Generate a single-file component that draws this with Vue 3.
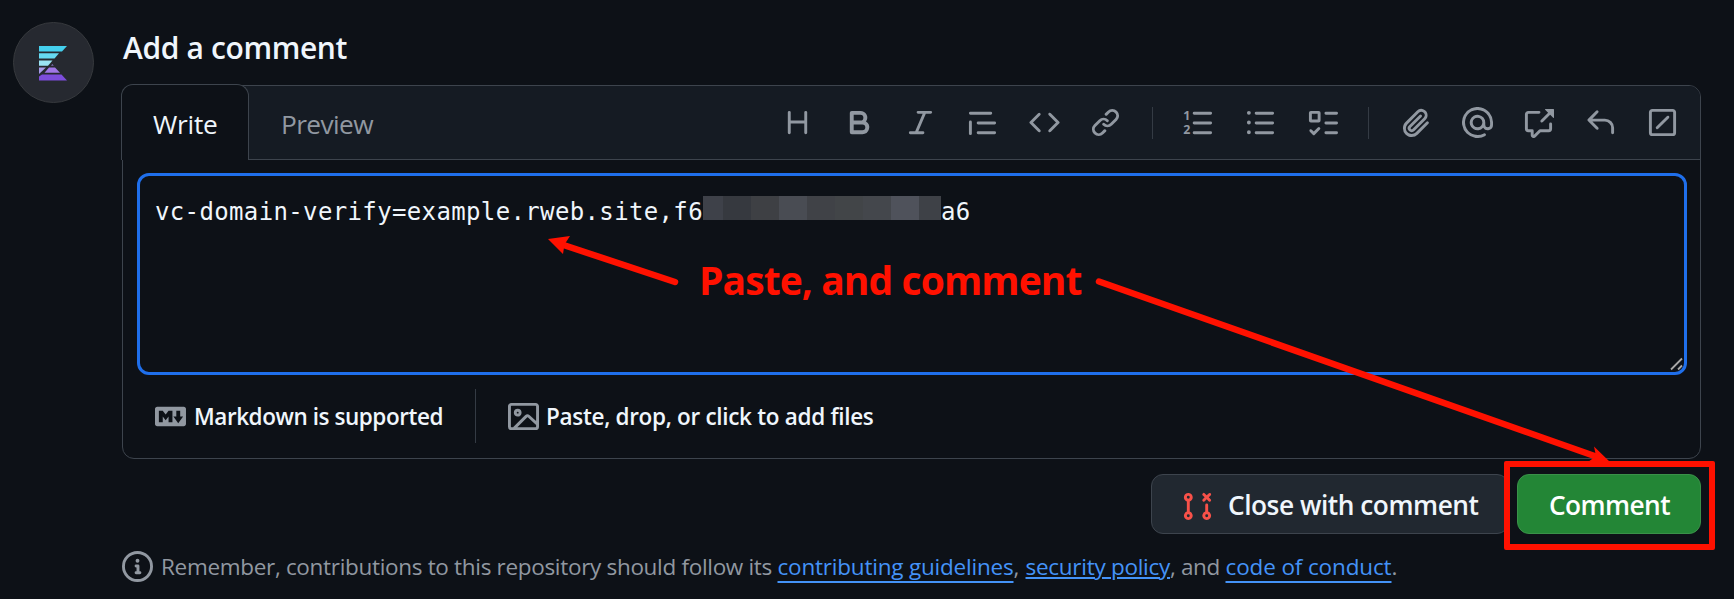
<script setup>
// Spreads a text run over a given advance width by adjusting its tracking.
const vFit = {
  mounted(el, { value }) {
    const count = el.textContent.length
    const natural = el.getBoundingClientRect().width
    el.style.letterSpacing = (value - natural) / count + 'px'
  }
}

const icons = {
  heading: 'M3.75 2a.75.75 0 0 1 .75.75V7h7V2.75a.75.75 0 0 1 1.5 0v10.5a.75.75 0 0 1-1.5 0V8.5h-7v4.75a.75.75 0 0 1-1.5 0V2.75A.75.75 0 0 1 3.75 2Z',
  bold: 'M4 2h4.5a3.501 3.501 0 0 1 2.852 5.53A3.499 3.499 0 0 1 9.5 14H4a1 1 0 0 1-1-1V3a1 1 0 0 1 1-1Zm1 7v3h4.5a1.5 1.5 0 0 0 0-3Zm3.5-2a1.5 1.5 0 0 0 0-3H5v3Z',
  italic: 'M6 2.75A.75.75 0 0 1 6.75 2h6.5a.75.75 0 0 1 0 1.5h-2.505l-3.858 9H9.25a.75.75 0 0 1 0 1.5h-6.5a.75.75 0 0 1 0-1.5h2.505l3.858-9H6.75A.75.75 0 0 1 6 2.75Z',
  quote: 'M1.75 2.5h10.5a.75.75 0 0 1 0 1.5H1.75a.75.75 0 0 1 0-1.5Zm4 5h8.5a.75.75 0 0 1 0 1.5h-8.5a.75.75 0 0 1 0-1.5Zm0 5h8.5a.75.75 0 0 1 0 1.5h-8.5a.75.75 0 0 1 0-1.5ZM2.5 7.75v6a.75.75 0 0 1-1.5 0v-6a.75.75 0 0 1 1.5 0Z',
  code: 'm11.28 3.22 4.25 4.25a.75.75 0 0 1 0 1.06l-4.25 4.25a.749.749 0 0 1-1.275-.326.749.749 0 0 1 .215-.734L13.94 8l-3.72-3.72a.749.749 0 0 1 .326-1.275.749.749 0 0 1 .734.215Zm-6.56 0a.751.751 0 0 1 1.042.018.751.751 0 0 1 .018 1.042L2.06 8l3.72 3.72a.749.749 0 0 1-.326 1.275.749.749 0 0 1-.734-.215L.47 8.53a.75.75 0 0 1 0-1.06Z',
  link: 'm7.775 3.275 1.25-1.25a3.5 3.5 0 1 1 4.95 4.95l-2.5 2.5a3.5 3.5 0 0 1-4.95 0 .751.751 0 0 1 .018-1.042.751.751 0 0 1 1.042-.018 1.998 1.998 0 0 0 2.83 0l2.5-2.5a2.002 2.002 0 0 0-2.83-2.83l-1.25 1.25a.751.751 0 0 1-1.042-.018.751.751 0 0 1-.018-1.042Zm-4.69 9.64a1.998 1.998 0 0 0 2.83 0l1.25-1.25a.751.751 0 0 1 1.042.018.751.751 0 0 1 .018 1.042l-1.25 1.25a3.5 3.5 0 1 1-4.95-4.95l2.5-2.5a3.5 3.5 0 0 1 4.95 0 .751.751 0 0 1-.018 1.042.751.751 0 0 1-1.042.018 1.998 1.998 0 0 0-2.83 0l-2.5 2.5a1.998 1.998 0 0 0 0 2.83Z',
  ordered: 'M5.75 2.5h8.5a.75.75 0 0 1 0 1.5h-8.5a.75.75 0 0 1 0-1.5Zm0 5h8.5a.75.75 0 0 1 0 1.5h-8.5a.75.75 0 0 1 0-1.5Zm0 5h8.5a.75.75 0 0 1 0 1.5h-8.5a.75.75 0 0 1 0-1.5Z',
  unordered: 'M5.75 2.5h8.5a.75.75 0 0 1 0 1.5h-8.5a.75.75 0 0 1 0-1.5Zm0 5h8.5a.75.75 0 0 1 0 1.5h-8.5a.75.75 0 0 1 0-1.5Zm0 5h8.5a.75.75 0 0 1 0 1.5h-8.5a.75.75 0 0 1 0-1.5ZM2 14a1 1 0 1 1 0-2 1 1 0 0 1 0 2Zm1-6a1 1 0 1 1-2 0 1 1 0 0 1 2 0ZM2 4a1 1 0 1 1 0-2 1 1 0 0 1 0 2Z',
  tasks: 'M2 2h4a1 1 0 0 1 1 1v4a1 1 0 0 1-1 1H2a1 1 0 0 1-1-1V3a1 1 0 0 1 1-1Zm4.655 8.595a.75.75 0 0 1 0 1.06L4.03 14.28a.75.75 0 0 1-1.06 0l-1.5-1.5a.749.749 0 0 1 .326-1.275.749.749 0 0 1 .734.215l.97.97 2.095-2.095a.75.75 0 0 1 1.06 0ZM9.75 2.5h5.5a.75.75 0 0 1 0 1.5h-5.5a.75.75 0 0 1 0-1.5Zm0 5h5.5a.75.75 0 0 1 0 1.5h-5.5a.75.75 0 0 1 0-1.5Zm0 5h5.5a.75.75 0 0 1 0 1.5h-5.5a.75.75 0 0 1 0-1.5Zm-7.25-9v3h3v-3Z',
  attach: 'M12.212 3.02a1.753 1.753 0 0 0-2.478.003l-5.83 5.83a3.007 3.007 0 0 0-.88 2.127c0 .795.315 1.551.88 2.116.567.567 1.333.89 2.126.89.79 0 1.548-.321 2.116-.89l5.48-5.48a.75.75 0 0 1 1.061 1.06l-5.48 5.48a4.492 4.492 0 0 1-3.177 1.33c-1.2 0-2.345-.487-3.187-1.33a4.483 4.483 0 0 1-1.32-3.177c0-1.195.475-2.341 1.32-3.186l5.83-5.83a3.25 3.25 0 0 1 5.553 2.297c0 .863-.343 1.691-.953 2.301L7.439 12.39c-.375.377-.884.59-1.416.593a1.998 1.998 0 0 1-1.412-.593 1.992 1.992 0 0 1 0-2.828l5.48-5.48a.751.751 0 0 1 1.042.018.751.751 0 0 1 .018 1.042l-5.48 5.48a.492.492 0 0 0 0 .707.499.499 0 0 0 .352.154.51.51 0 0 0 .356-.154l5.833-5.827a1.755 1.755 0 0 0 0-2.481Z',
  mention: 'M4.75 2.37a6.501 6.501 0 0 0 6.5 11.26.75.75 0 0 1 .75 1.298A7.999 7.999 0 0 1 .989 4.148 8 8 0 0 1 16 7.75v1.5a2.75 2.75 0 0 1-5.072 1.475 3.999 3.999 0 0 1-6.65-4.19A4 4 0 0 1 12 8v1.25a1.25 1.25 0 0 0 2.5 0V7.867a6.5 6.5 0 0 0-9.75-5.496ZM10.5 8a2.5 2.5 0 1 0-5 0 2.5 2.5 0 0 0 5 0Z',
  reference: 'M2.75 3.5a.25.25 0 0 0-.25.25v7.5c0 .138.112.25.25.25h2a.75.75 0 0 1 .75.75v2.19l2.72-2.72a.749.749 0 0 1 .53-.22h4.5a.25.25 0 0 0 .25-.25v-2.5a.75.75 0 0 1 1.5 0v2.5A1.75 1.75 0 0 1 13.25 13H9.06l-2.573 2.573A1.458 1.458 0 0 1 4 14.543V13H2.75A1.75 1.75 0 0 1 1 11.25v-7.5C1 2.784 1.784 2 2.75 2h5.5a.75.75 0 0 1 0 1.5ZM16 1.25v4.146a.25.25 0 0 1-.427.177L14.03 4.03l-3.75 3.75a.749.749 0 0 1-1.275-.326.749.749 0 0 1 .215-.734l3.75-3.75-1.543-1.543A.25.25 0 0 1 11.604 1h4.146a.25.25 0 0 1 .25.25Z',
  reply: 'M6.78 1.97a.75.75 0 0 1 0 1.06L3.81 6h6.44A4.75 4.75 0 0 1 15 10.75v2.5a.75.75 0 0 1-1.5 0v-2.5a3.25 3.25 0 0 0-3.25-3.25H3.81l2.97 2.97a.749.749 0 0 1-.326 1.275.749.749 0 0 1-.734-.215L1.47 7.28a.75.75 0 0 1 0-1.06l4.25-4.25a.75.75 0 0 1 1.06 0Z',
  slash: 'M13.25 1c.966 0 1.75.784 1.75 1.75v10.5A1.75 1.75 0 0 1 13.25 15H2.75A1.75 1.75 0 0 1 1 13.25V2.75C1 1.784 1.784 1 2.75 1ZM2.75 2.5a.25.25 0 0 0-.25.25v10.5c0 .138.112.25.25.25h10.5a.25.25 0 0 0 .25-.25V2.75a.25.25 0 0 0-.25-.25Zm8.53 3.28-5.5 5.5a.75.75 0 0 1-1.06-1.06l5.5-5.5a.749.749 0 0 1 1.275.326.749.749 0 0 1-.215.734Z',
  markdown: 'M14.85 3c.63 0 1.15.52 1.14 1.15v7.7c0 .63-.51 1.15-1.15 1.15H1.15C.52 13 0 12.48 0 11.84V4.15C0 3.52.52 3 1.15 3ZM9 11V5H7L5.5 7 4 5H2v6h2V8l1.5 1.92L7 8v3Zm2.99.5L14.5 8H13V5h-2v3H9.5Z',
  image: 'M16 13.25A1.75 1.75 0 0 1 14.25 15H1.75A1.75 1.75 0 0 1 0 13.25V2.75C0 1.784.784 1 1.75 1h12.5c.966 0 1.75.784 1.75 1.75ZM1.75 2.5a.25.25 0 0 0-.25.25v10.5c0 .138.112.25.25.25h.94l.03-.03 6.077-6.078a1.75 1.75 0 0 1 2.412-.06L14.5 10.31V2.75a.25.25 0 0 0-.25-.25Zm12.5 11a.25.25 0 0 0 .25-.25v-.917l-4.298-3.889a.25.25 0 0 0-.344.009L4.81 13.5ZM7 6a2 2 0 1 1-3.999.001A2 2 0 0 1 7 6ZM5.5 6a.5.5 0 1 0-1 0 .5.5 0 0 0 1 0Z',
  closed: 'M3.25 1A2.25 2.25 0 0 1 4 5.372v5.256a2.251 2.251 0 1 1-1.5 0V5.372A2.251 2.251 0 0 1 3.25 1Zm9.5 5.5a.75.75 0 0 1 .75.75v3.378a2.251 2.251 0 1 1-1.5 0V7.25a.75.75 0 0 1 .75-.75Zm-2.03-5.273a.75.75 0 0 1 1.06 0l.97.97.97-.97a.748.748 0 0 1 1.265.332.75.75 0 0 1-.205.729l-.97.97.97.97a.751.751 0 0 1-.018 1.042.751.751 0 0 1-1.042.018l-.97-.97-.97.97a.749.749 0 0 1-1.275-.326.749.749 0 0 1 .215-.734l.97-.97-.97-.97a.75.75 0 0 1 0-1.06ZM2.5 3.25a.75.75 0 1 0 1.5 0 .75.75 0 0 0-1.5 0ZM3.25 12a.75.75 0 1 0 0 1.5.75.75 0 0 0 0-1.5Zm9.5 0a.75.75 0 1 0 0 1.5.75.75 0 0 0 0-1.5Z',
  info: 'M0 8a8 8 0 1 1 16 0A8 8 0 0 1 0 8Zm8-6.5a6.5 6.5 0 1 0 0 13 6.5 6.5 0 0 0 0-13ZM6.5 7.75A.75.75 0 0 1 7.25 7h1a.75.75 0 0 1 .75.75v2.75h.25a.75.75 0 0 1 0 1.5h-2a.75.75 0 0 1 0-1.5h.25v-2h-.25a.75.75 0 0 1-.75-.75ZM8 6a1 1 0 1 1 0-2 1 1 0 0 1 0 2Z'
}

const toolbar = [
  ['heading', 'bold', 'italic', 'quote', 'code', 'link'],
  ['ordered', 'unordered', 'tasks'],
  ['attach', 'mention', 'reference', 'reply', 'slash']
]

const mosaic = [
  { w: 20, c: '#3e4149' },
  { w: 28, c: '#36393f' },
  { w: 28, c: '#3e4044' },
  { w: 28, c: '#494c53' },
  { w: 28, c: '#404247' },
  { w: 28, c: '#424548' },
  { w: 28, c: '#44474c' },
  { w: 28, c: '#4f525b' },
  { w: 22, c: '#3e4147' }
]
</script>

<template>
  <main class="page">
    <aside class="avatar">
      <svg width="28" height="35" viewBox="0 0 28 35">
        <path d="M0 0H28L23 5.5H0Z" fill="#45d0ee" />
        <path d="M0 7.3H20L15.5 12.6H0Z" fill="#66d9f1" />
        <path d="M0 14.5H13.5L9 19.7H0Z" fill="#9be4f4" />
        <path d="M0 21.5H7L0 28Z" fill="#a79be8" />
        <path d="M12 19.6l1.3-1.3 1.5 1.3Z" fill="#a78be8" />
        <path d="M10 21.5H16L21 26.7H5.5Z" fill="#a077e6" />
        <path d="M3 28.6H22.5L28 34.6H0V30.6Z" fill="#7d4ddb" />
      </svg>
    </aside>

    <section class="content">
      <h1 class="title"><span v-fit="224">Add a comment</span></h1>

      <div class="editor">
        <header class="editor-head">
          <div class="tab tab-active"><span v-fit="64.5">Write</span></div>
          <div class="tab"><span v-fit="92">Preview</span></div>
          <div class="toolbar">
            <div v-for="(group, g) in toolbar" :key="g" class="tool-group">
              <span v-for="name in group" :key="name" class="tool">
                <svg class="icon" viewBox="0 0 16 16">
                  <path :d="icons[name]" />
                  <template v-if="name === 'ordered'">
                    <text class="digit" x="0.1" y="6.9">1</text>
                    <text class="digit" x="0.1" y="14">2</text>
                  </template>
                </svg>
              </span>
            </div>
          </div>
        </header>

        <div class="field">
          <span v-fit="548">vc-domain-verify=example.rweb.site,f6</span>
          <span class="mosaic">
            <i v-for="(m, i) in mosaic" :key="i" :style="{ width: m.w + 'px', background: m.c }"></i>
          </span>
          <span v-fit="29.7">a6</span>
          <svg class="grip" width="16" height="16" viewBox="0 0 16 16">
            <path d="M2 13.5 13 2.5M9 13.5l4-4" />
          </svg>
        </div>

        <footer class="editor-foot">
          <div class="hint hint-md">
            <svg class="icon" viewBox="0 0 16 16"><path :d="icons.markdown" /></svg>
            <span v-fit="249">Markdown is supported</span>
          </div>
          <div class="hint hint-file">
            <svg class="icon" viewBox="0 0 16 16"><path :d="icons.image" /></svg>
            <span v-fit="327.5">Paste, drop, or click to add files</span>
          </div>
        </footer>
      </div>

      <div class="actions">
        <button class="btn btn-close">
          <svg class="icon icon-closed" viewBox="0 0 16 16"><path :d="icons.closed" /></svg>
          <span v-fit="250.5">Close with comment</span>
        </button>
        <button class="btn btn-primary"><span v-fit="121">Comment</span></button>
      </div>

      <p class="note">
        <svg class="icon" viewBox="0 0 16 16"><path :d="icons.info" /></svg>
        <span v-fit="616.5">Remember, contributions to this repository should follow its </span>
        <a v-fit="236" class="low">contributing guidelines</a>
        <span v-fit="12">, </span>
        <a v-fit="144.5" class="near">security policy</a>
        <span v-fit="55.5">, and </span>
        <a v-fit="166" class="low">code of conduct</a>
        <span>.</span>
      </p>
    </section>

    <div class="annotation">
      <svg width="1734" height="599" viewBox="0 0 1734 599">
        <path class="shaft" d="M675 282 562 244.5M1099 281.5 1596 456.5" />
        <path class="head" d="M548 239 570 236 564.5 244.5 563 254ZM1610 462 1594 446.5 1596 456 1588 462Z" />
      </svg>
      <span class="callout"><b v-fit="382.5">Paste, and comment</b></span>
      <div class="frame"></div>
    </div>
  </main>
</template>

<style>
body {
  background: #0d1117;
}
</style>

<style scoped>
.page {
  position: relative;
  display: flex;
  box-sizing: border-box;
  width: 1734px;
  height: 599px;
  padding-left: 13px;
  overflow: hidden;
  background: #0d1117;
  color: #f0f6fc;
  font-family: "Open Sans", "Noto Sans", sans-serif;
  white-space: pre;
}
.avatar {
  display: flex;
  box-sizing: border-box;
  width: 81px;
  height: 81px;
  margin: 22px 28px 0 0;
  padding: 23px 0 0 25px;
  border: 1px solid #36393d;
  border-radius: 50%;
  background: #262930;
}
.content {
  width: 1579px;
}
.title {
  height: 60px;
  margin: 0;
  padding: 18px 0 7px 1px;
  font-size: 30px;
  font-weight: 600;
  line-height: 60px;
}
.editor {
  box-sizing: border-box;
  height: 374px;
  border: 1px solid #3d444d;
  border-radius: 12px;
}
.editor-head {
  display: flex;
  box-sizing: border-box;
  height: 74px;
  border-bottom: 1px solid #3d444d;
  border-radius: 11px 11px 0 0;
  background: #151b23;
}
.tab {
  box-sizing: border-box;
  height: 76px;
  padding-left: 32px;
  color: #9198a1;
  font-size: 26.3px;
  line-height: 77px;
}
.tab-active {
  width: 128px;
  height: 76px;
  margin: -2px 0 0 -2px;
  padding-left: 31px;
  border: 1px solid #3d444d;
  border-bottom: 0;
  border-radius: 12px 12px 0 0;
  background: #0d1117;
  color: #f0f6fc;
  line-height: 79px;
}
.toolbar {
  display: flex;
  align-items: center;
  margin-left: auto;
  padding-right: 7px;
}
.tool-group {
  display: flex;
  align-items: center;
}
.tool-group + .tool-group::before {
  content: "";
  width: 1px;
  height: 32px;
  margin: 0 15.2px;
  background: #343b44;
}
.tool {
  display: flex;
  justify-content: center;
  width: 61.7px;
  color: #9198a1;
}
.icon {
  flex: none;
  width: 31px;
  height: 31px;
  color: #9198a1;
  fill: currentColor;
}
.digit {
  font: 700 6.4px "Open Sans", sans-serif;
}
.field {
  position: relative;
  display: flex;
  box-sizing: border-box;
  height: 202px;
  margin: 13px 13px 0 14px;
  padding: 19px 0 0 15px;
  border: 3px solid #1f6feb;
  border-radius: 12px;
  font: 24px/34px "DejaVu Sans Mono", monospace;
}
.mosaic {
  display: flex;
  height: 24px;
  margin-top: 1px;
}
.grip {
  position: absolute;
  right: -1px;
  bottom: 0;
  fill: none;
  stroke: #a8a8a8;
  stroke-width: 1.8;
}
.editor-foot {
  display: flex;
  align-items: center;
  height: 82px;
}
.hint {
  display: flex;
  align-items: center;
  box-sizing: border-box;
  height: 54px;
  font-size: 22.5px;
  font-weight: 600;
}
.hint-md {
  width: 353px;
  padding-left: 32px;
  gap: 8px;
  border-right: 1px solid #343b44;
}
.hint-file {
  padding-left: 32px;
  gap: 7px;
}
.actions {
  display: flex;
  justify-content: flex-end;
  gap: 8px;
  margin-top: 15px;
}
.btn {
  display: flex;
  align-items: center;
  box-sizing: border-box;
  height: 60px;
  padding: 1px 0 0;
  border: 1px solid #3d444d;
  border-radius: 12px;
  background: #212830;
  color: #f0f6fc;
  font: 600 26.3px "Open Sans", sans-serif;
  white-space: pre;
}
.btn-close {
  width: 358px;
  padding-left: 30px;
  gap: 15px;
}
.icon-closed {
  margin-top: 4px;
  color: #f85149;
}
.btn-primary {
  width: 184px;
  padding-left: 31px;
  border-color: #3a9149;
  background: #238636;
  color: #fff;
}
.note {
  display: flex;
  align-items: center;
  height: 32px;
  margin: 16px 0 0;
  color: #9198a1;
  font-size: 22.5px;
  line-height: 32px;
}
.note span,
.note a {
  padding-top: 2px;
}
.note .icon {
  margin-right: 8px;
}
.note a {
  color: #4493f8;
  text-decoration: underline;
  text-decoration-thickness: 2px;
}
.note .low {
  text-underline-offset: 6px;
  text-decoration-skip-ink: none;
}
.note .near {
  text-underline-offset: 2px;
}
.annotation {
  position: absolute;
  inset: 0;
  color: #ff1100;
}
.annotation svg {
  display: block;
}
.shaft {
  fill: none;
  stroke: currentColor;
  stroke-width: 6.5;
  stroke-linecap: round;
}
.head {
  fill: currentColor;
  stroke: none;
}
.callout {
  position: absolute;
  left: 699px;
  top: 250px;
  font-size: 39px;
  line-height: 60px;
}
.frame {
  position: absolute;
  left: 1504px;
  top: 461px;
  box-sizing: border-box;
  width: 211px;
  height: 89px;
  border: 6px solid currentColor;
  border-radius: 2px;
}
</style>
